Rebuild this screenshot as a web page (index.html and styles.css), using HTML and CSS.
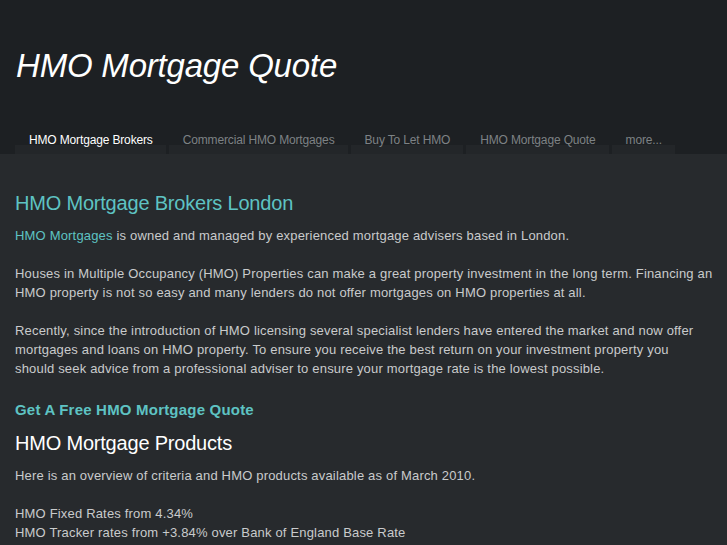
FILE: index.html
```html
<!DOCTYPE html>
<html>
<head>
<meta charset="utf-8">
<title>HMO Mortgage Quote</title>
<link rel="stylesheet" href="styles.css">
</head>
<body>
<header class="site-header">
  <h1 class="site-title">HMO Mortgage Quote</h1>
  <nav class="nav">
    <a class="tab active" href="#">HMO Mortgage Brokers</a>
    <a class="tab" href="#">Commercial HMO Mortgages</a>
    <a class="tab" href="#">Buy To Let HMO</a>
    <a class="tab" href="#">HMO Mortgage Quote</a>
    <a class="tab" href="#">more...</a>
  </nav>
</header>
<main class="content">
  <h2 class="heading teal">HMO Mortgage Brokers London</h2>
  <p class="para"><a class="link" href="#">HMO Mortgages</a> is owned and managed by experienced mortgage advisers based in London.</p>
  <p class="para">Houses in Multiple Occupancy (HMO) Properties can make a great property investment in the long term. Financing an HMO property is not so easy and many lenders do not offer mortgages on HMO properties at all.</p>
  <p class="para">Recently, since the introduction of HMO licensing several specialist lenders have entered the market and now offer mortgages and loans on HMO property. To ensure you receive the best return on your investment property you<br>should seek advice from a professional adviser to ensure your mortgage rate is the lowest possible.</p>
  <h3 class="subheading">Get A Free HMO Mortgage Quote</h3>
  <h2 class="heading white">HMO Mortgage Products</h2>
  <p class="para">Here is an overview of criteria and HMO products available as of March 2010.</p>
  <p class="para">HMO Fixed Rates from 4.34%<br>HMO Tracker rates from +3.84% over Bank of England Base Rate</p>
</main>
</body>
</html>
```
FILE: styles.css
```css
html, body {
  margin: 0;
  padding: 0;
  background: #272a2d;
  font-family: "Liberation Sans", Arial, sans-serif;
  height: 545px;
  overflow: hidden;
}
.site-header {
  background: #1d2023;
  height: 154px;
  display: flex;
  flex-direction: column;
}
.site-title {
  margin: 0;
  padding: 46px 0 0 16px;
  font-size: 33px;
  line-height: 40px;
  font-weight: normal;
  font-style: italic;
  color: #ffffff;
  letter-spacing: -0.2px;
}
.nav {
  margin-top: auto;
  display: flex;
  gap: 3px;
  padding-left: 15px;
}
.tab {
  display: block;
  padding: 2px 13px 0 14px;
  height: 29px;
  line-height: 27px;
  box-sizing: border-box;
  font-size: 12px;
  color: #7d8285;
  text-decoration: none;
  background: linear-gradient(to bottom, #1d2023 0, #1d2023 20px, #232629 20px, #232629 100%);
  letter-spacing: -0.15px;
}
.tab.active {
  color: #ffffff;
}
.content {
  padding: 37px 12px 0 15px;
  color: #c9cbcc;
}
.heading {
  margin: 0 0 10px 0;
  font-size: 20px;
  line-height: 25px;
  font-weight: normal;
  letter-spacing: -0.2px;
}
.teal { color: #5ec3c3; }
.white { color: #ffffff; }
.para {
  margin: 0 0 19px 0;
  font-size: 13px;
  line-height: 19px;
  letter-spacing: 0.18px;
}
.link {
  color: #5ec3c3;
  text-decoration: none;
}
.subheading {
  margin: 22px 0 11px 0;
  font-size: 15px;
  line-height: 20px;
  font-weight: bold;
  color: #5ec3c3;
  letter-spacing: 0.2px;
}
```
